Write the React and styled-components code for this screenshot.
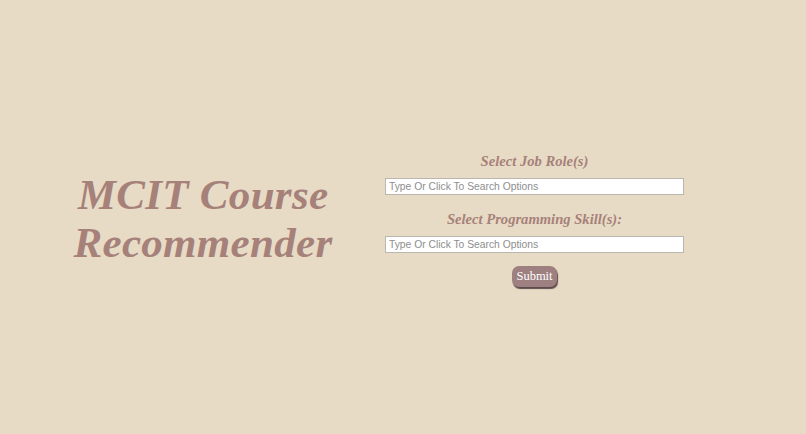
import React from "react";
import styled, { createGlobalStyle } from "styled-components";

const Global = createGlobalStyle`
  html, body { margin: 0; padding: 0; height: 100%; }
  body { background: #e8dbc5; }
  #root { height: 100%; }
`;

const Page = styled.div`
  height: 434px;
  background: #e8dbc5;
  display: flex;
  align-items: center;
  padding-left: 53px;
  gap: 32px;
  box-sizing: border-box;
`;

const TitleCol = styled.div`
  width: 300px;
  display: flex;
  justify-content: center;
`;

const Title = styled.h1`
  margin: 4px 0 0;
  font-family: "Liberation Serif", serif;
  font-style: italic;
  font-weight: 700;
  font-size: 43px;
  line-height: 48px;
  letter-spacing: 0.3px;
  color: #a6817a;
  text-align: center;
`;

const Form = styled.div`
  width: 299px;
  padding-top: 4px;
  display: flex;
  flex-direction: column;
  align-items: center;
`;

const Label = styled.label`
  font-family: "Liberation Serif", serif;
  font-style: italic;
  font-weight: 700;
  font-size: 14.6px;
  line-height: 18px;
  color: #a6817a;
  margin-top: ${(p) => p.$top}px;
  margin-bottom: 8px;
`;

const Input = styled.input`
  width: 100%;
  height: 17px;
  box-sizing: border-box;
  border: 1px solid #bbb6b0;
  background: #fff;
  padding: 0 3px;
  font-family: "Liberation Sans", sans-serif;
  font-size: 10.3px;
  color: #333;
  outline: none;
  &::placeholder { color: #8e8e8e; }
`;

const Button = styled.button`
  margin-top: 13px;
  height: 21px;
  padding: 0 4px;
  border: none;
  border-radius: 7px;
  background: #9e8080;
  color: #fff;
  font-family: "Liberation Serif", serif;
  font-size: 12.5px;
  box-shadow: 1px 2px 1px #5e4c4c;
`;

export default function App() {
  return (
    <>
      <Global />
      <Page>
        <TitleCol>
          <Title>
            MCIT Course
            <br />
            Recommender
          </Title>
        </TitleCol>
        <Form>
          <Label $top={0}>Select Job Role(s)</Label>
          <Input placeholder="Type Or Click To Search Options" />
          <Label $top={15}>Select Programming Skill(s):</Label>
          <Input placeholder="Type Or Click To Search Options" />
          <Button>Submit</Button>
        </Form>
      </Page>
    </>
  );
}
